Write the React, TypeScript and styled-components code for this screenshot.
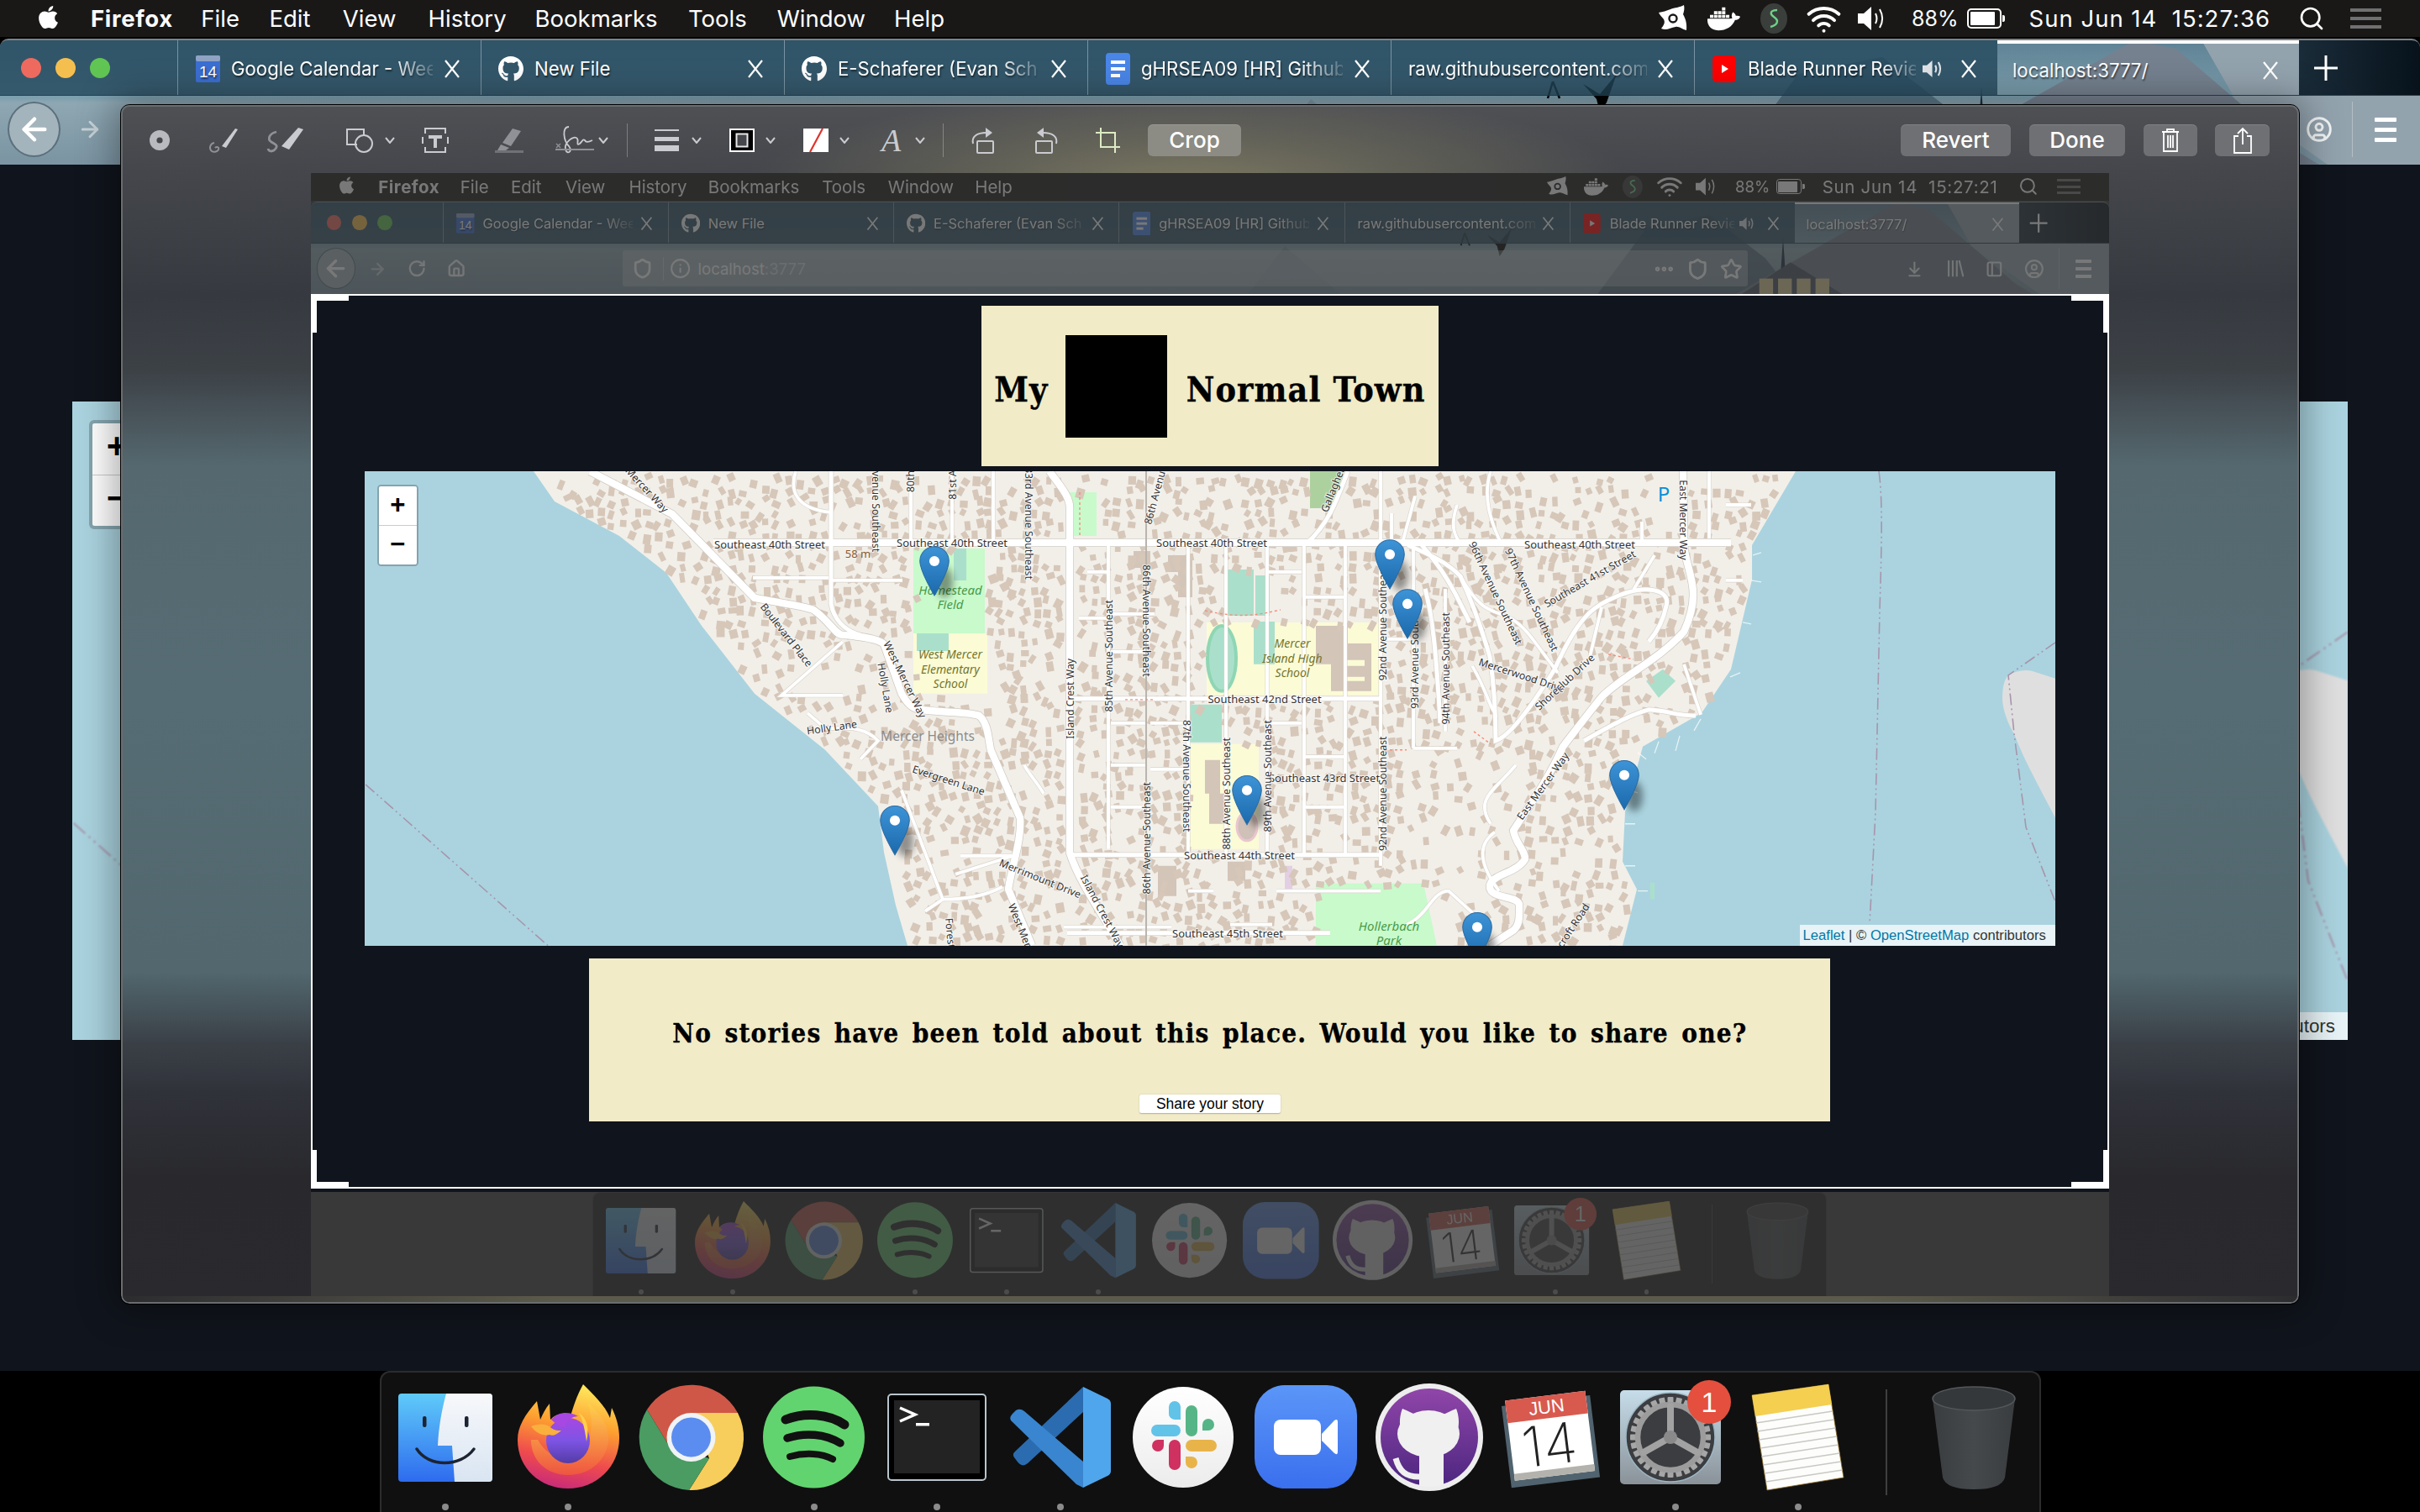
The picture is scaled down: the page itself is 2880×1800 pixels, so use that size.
import React from 'react'
import styled, { createGlobalStyle } from 'styled-components'
import { FaApple, FaDocker, FaGithub } from 'react-icons/fa'
import {
  ArrowDownToLine,
  ArrowLeft,
  ArrowRight,
  CircleUser,
  Ellipsis,
  House,
  Info,
  PanelLeft,
  RotateCw,
  Search,
  Shield,
  Star,
  Wifi,
} from 'lucide-react'

const GlobalStyle = createGlobalStyle`
  html, body {
    margin: 0;
    padding: 0;
    width: 2880px;
    height: 1800px;
    overflow: hidden;
    background: #000;
  }
  * { box-sizing: border-box; }
`

const UI_FONT = `Inter, "Liberation Sans", sans-serif`
const TYPE_FONT = `"DejaVu Serif Condensed", "DejaVu Serif", "Liberation Serif", serif`
const MONO_FONT = `"Liberation Mono", "Courier New", monospace`

/* ---------- desktop shell, used twice: the real one and the one in the screenshot ---------- */

const Screen = styled.div`
  position: relative;
  width: 2880px;
  height: 1800px;
  display: flex;
  flex-direction: column;
  background: #000;
  overflow: hidden;
`

const DimZone = styled.div<{ $dim?: boolean; $dock?: boolean }>`
  flex: none;
  background: ${({ $dim, $dock }) => ($dim ? ($dock ? '#393939' : '#363636') : 'transparent')};
  & > * {
    opacity: ${({ $dim, $dock }) => ($dim ? ($dock ? 0.22 : 0.33) : 1)};
  }
`

const MenuBarRow = styled.div`
  height: 44px;
  background: #191817;
  display: flex;
  align-items: center;
  padding-left: 42px;
  padding-right: 46px;
  color: #fff;
  font: 400 27.5px ${UI_FONT};
`

const MenuItem = styled.span<{ $bold?: boolean; $ml: number }>`
  margin-left: ${({ $ml }) => $ml}px;
  font-weight: ${({ $bold }) => ($bold ? 700 : 400)};
  letter-spacing: ${({ $bold }) => ($bold ? '0.7px' : '0')};
  white-space: nowrap;
`

const StatusGroup = styled.div`
  margin-left: auto;
  display: flex;
  align-items: center;
`

const StatusItem = styled.div<{ $ml: number }>`
  margin-left: ${({ $ml }) => $ml}px;
  display: flex;
  align-items: center;
  white-space: nowrap;
`

const BatteryLabel = styled.span`
  font-size: 25px;
`

const ClockLabel = styled.span`
  letter-spacing: 1px;
`

const BatteryShell = styled.div`
  width: 41px;
  height: 24px;
  border: 2px solid #fff;
  border-radius: 5px;
  padding: 2px;
  position: relative;
  &::before {
    content: '';
    display: block;
    height: 100%;
    width: 88%;
    background: #fff;
    border-radius: 1px;
  }
  &::after {
    content: '';
    position: absolute;
    right: -6px;
    top: 6px;
    width: 3px;
    height: 8px;
    background: #fff;
    border-radius: 0 2px 2px 0;
  }
`

const Browser = styled.div`
  position: relative;
  height: 150px;
  margin-top: 2px;
  border-top: 2px solid #7b8286;
  border-radius: 10px 10px 0 0;
  overflow: hidden;
  background: #0d1a24;
`

const WallpaperArt = styled.svg`
  position: absolute;
  left: 0;
  top: 0;
  width: 2880px;
  height: 148px;
`

const TabStrip = styled.div`
  position: relative;
  height: 66px;
  display: flex;
  border-bottom: 1px solid #26404f;
`

const LightsCell = styled.div`
  width: 211px;
  flex: none;
  display: flex;
  align-items: center;
  gap: 17px;
  padding-left: 25px;
  background: rgba(36, 72, 92, 0.8);
`

const Light = styled.span<{ $color: string }>`
  width: 24px;
  height: 24px;
  border-radius: 50%;
  background: ${({ $color }) => $color};
`

const Tab = styled.div<{ $active?: boolean }>`
  width: ${({ $active }) => ($active ? 359 : 361)}px;
  flex: none;
  display: flex;
  align-items: center;
  padding: 2px 0 0 ${({ $active }) => ($active ? 18 : 20)}px;
  border-left: ${({ $active }) => ($active ? '0' : '1px solid rgba(210, 225, 235, 0.45)')};
  border-top: ${({ $active }) => ($active ? '4px solid #fff' : '0')};
  background: ${({ $active }) => ($active ? 'transparent' : 'rgba(36, 72, 92, 0.8)')};
  color: #fff;
  font: 400 22.2px ${UI_FONT};
  text-shadow: 1px 2px 2px rgba(0, 0, 0, 0.55);
`

const Favicon = styled.span`
  width: 30px;
  height: 32px;
  flex: none;
  margin-right: 13px;
  display: flex;
  align-items: center;
  justify-content: center;
`

const TabTitle = styled.span<{ $w: number; $fade?: boolean }>`
  width: ${({ $w }) => $w}px;
  flex: none;
  white-space: nowrap;
  ${({ $fade }) => ($fade ? 'mask-image: linear-gradient(90deg, #000 80%, rgba(0, 0, 0, 0.15) 100%);' : '')}
`

const TabClose = styled.svg`
  margin-left: auto;
  margin-right: 24px;
  width: 20px;
  height: 22px;
  flex: none;
`

const NewTabCell = styled.div`
  flex: 1;
  display: flex;
  align-items: center;
  justify-content: center;
  padding-right: 80px;
  background: linear-gradient(90deg, #1a2c39, #07121b);
`

const ToolbarRow = styled.div`
  position: relative;
  height: 80px;
  display: flex;
  align-items: center;
  padding-left: 9px;
`

const BackButton = styled.div`
  width: 63px;
  height: 66px;
  flex: none;
  border-radius: 50%;
  border: 2px solid #5b707c;
  background: #a4b4bc;
  display: flex;
  align-items: center;
  justify-content: center;
  color: #fff;
`

const ChromeIcon = styled.div<{ $ml: number; $w?: number }>`
  margin-left: ${({ $ml }) => $ml}px;
  width: ${({ $w }) => $w ?? 30}px;
  flex: none;
  display: flex;
  align-items: center;
  justify-content: center;
  color: #f2f4f5;
`

const AddressBar = styled.div<{ $covered?: boolean }>`
  margin-left: 252px;
  width: 1801px;
  height: 58px;
  flex: none;
  display: flex;
  align-items: center;
  padding-left: 14px;
  border-radius: 4px;
  background: rgba(215, 220, 220, 0.4);
  color: #fff;
  font: 400 25px ${UI_FONT};
  visibility: ${({ $covered }) => ($covered ? 'hidden' : 'visible')};
`

const AddressDivider = styled.span`
  width: 1px;
  height: 38px;
  margin: 0 10px 0 16px;
  background: rgba(255, 255, 255, 0.35);
`

const Host = styled.span`
  margin-left: 11px;
`

const Port = styled.span`
  opacity: 0.55;
`

const AddressEnd = styled.div`
  margin-left: auto;
  display: flex;
  align-items: center;
  gap: 18px;
  padding-right: 8px;
`

const ToolbarDivider = styled.span<{ $ml: number }>`
  margin-left: ${({ $ml }) => $ml}px;
  width: 1px;
  height: 66px;
  background: rgba(255, 255, 255, 0.3);
`

const Burger = styled.div<{ $ml: number }>`
  margin-left: ${({ $ml }) => $ml}px;
  width: 26px;
  display: flex;
  flex-direction: column;
  gap: 7px;
  & > span {
    height: 5px;
    border-radius: 1px;
    background: #fff;
  }
`

const ListGlyph = styled.div`
  width: 37px;
  display: flex;
  flex-direction: column;
  gap: 6px;
  & > span {
    height: 4px;
    background: #707070;
  }
`

/* ---------- the page itself ---------- */

const PageArea = styled.div`
  position: relative;
  height: 1436px;
  flex: none;
  background: #10141c;
  display: flex;
  flex-direction: column;
  align-items: center;
  padding-top: 17px;
`

const TitleCard = styled.div<{ $covered?: boolean }>`
  width: 733px;
  height: 257px;
  flex: none;
  background: #f1ebc8;
  color: #000;
  display: flex;
  align-items: center;
  padding-left: 21px;
  font: 700 55px/1 ${TYPE_FONT};
  font-stretch: condensed;
  letter-spacing: 1.5px;
  -webkit-text-stroke: 0.5px #000;
  visibility: ${({ $covered }) => ($covered ? 'hidden' : 'visible')};
`

const TitleWord = styled.span`
  white-space: nowrap;
  padding-top: 14px;
`

const BlackBox = styled.div`
  width: 162px;
  height: 164px;
  margin-left: 28px;
  margin-right: 31px;
  background: #000;
`

const MapFrame = styled.div`
  position: relative;
  width: 2708px;
  height: 760px;
  margin-top: 8px;
  flex: none;
  overflow: hidden;
  background: #aad3df;
`

const MapArt = styled.svg`
  display: block;
  width: 2708px;
  height: 760px;
`

const ZoomControl = styled.div`
  position: absolute;
  left: 20px;
  top: 22px;
  width: 66px;
  height: 130px;
  border: 4px solid rgba(0, 0, 0, 0.22);
  border-radius: 6px;
  background-clip: padding-box;
  display: flex;
  flex-direction: column;
`

const ZoomButton = styled.div<{ $last?: boolean }>`
  flex: 1;
  display: flex;
  align-items: center;
  justify-content: center;
  background: #fff;
  color: #000;
  font: 700 42px/1 ${MONO_FONT};
  border-bottom: ${({ $last }) => ($last ? '0' : '1px solid #ccc')};
  border-radius: ${({ $last }) => ($last ? '0 0 3px 3px' : '3px 3px 0 0')};
`

const Attribution = styled.div`
  position: absolute;
  right: 0;
  bottom: 0;
  height: 33px;
  padding: 0 15px 0 5px;
  display: flex;
  align-items: center;
  background: rgba(255, 255, 255, 0.72);
  color: #333;
  font: 400 22.4px "Liberation Sans", sans-serif;
  white-space: nowrap;
  & > a {
    color: #0078a8;
    text-decoration: none;
  }
`

const StoryCard = styled.div<{ $covered?: boolean }>`
  width: 1988px;
  height: 260px;
  margin-top: 21px;
  flex: none;
  background: #f1ebc8;
  display: flex;
  flex-direction: column;
  align-items: center;
  padding-top: 97px;
  visibility: ${({ $covered }) => ($covered ? 'hidden' : 'visible')};
`

const StoryText = styled.p`
  margin: 0;
  color: #000;
  font: 700 42px/48px ${TYPE_FONT};
  font-stretch: condensed;
  letter-spacing: 1.6px;
  word-spacing: 6px;
  -webkit-text-stroke: 0.4px #000;
  white-space: nowrap;
`

const ShareButton = styled.button`
  width: 225px;
  height: 30px;
  margin-top: 72px;
  padding: 0;
  border: 0;
  border-radius: 3px;
  background: #fff;
  box-shadow: 0 1px 2px rgba(0, 0, 0, 0.25);
  color: #000;
  font: 400 23.5px/30px "Liberation Sans", sans-serif;
`

/* ---------- dock ---------- */

const DockShelf = styled.div`
  height: 170px;
  display: flex;
  justify-content: center;
`

const DockBody = styled.div`
  width: 1977px;
  height: 170px;
  padding: 0 5px 0 3px;
  display: flex;
  background: #101010;
  border: 2px solid #2c2c2c;
  border-bottom: 0;
  border-radius: 12px 12px 0 0;
`

const DockSlot = styled.div<{ $running?: boolean }>`
  position: relative;
  width: 146.4px;
  flex: none;
  display: flex;
  justify-content: center;
  padding-top: 13px;
  height: 168px;
  &::after {
    content: '';
    display: ${({ $running }) => ($running ? 'block' : 'none')};
    position: absolute;
    left: 50%;
    bottom: 4px;
    width: 8px;
    height: 8px;
    margin-left: -4px;
    border-radius: 50%;
    background: #8b8b8b;
  }
`

const DockSeparator = styled.span`
  width: 2px;
  height: 126px;
  margin: 20px 30px 0 31px;
  flex: none;
  background: #3f3f3f;
`

const DockArt = styled.svg<{ $top: number }>`
  display: block;
  margin-top: ${({ $top }) => $top}px;
  overflow: visible;
`

/* ---------- screenshot markup window ---------- */

const MarkupWindow = styled.div`
  position: absolute;
  left: 144px;
  top: 125px;
  width: 2592px;
  height: 1427px;
  display: flex;
  flex-direction: column;
  align-items: center;
  border: 2px solid #6a6d70;
  border-radius: 10px;
  outline: 1px solid #000;
  box-shadow: 0 0 44px 8px rgba(0, 0, 0, 0.35);
  background: linear-gradient(
    180deg,
    #4f5054 0%,
    #44464b 5.7%,
    #363a40 15.8%,
    #3c4146 22%,
    #55686f 30%,
    #566c74 50%,
    #52676e 72.4%,
    #3a3f46 78.5%,
    #30323a 82.5%,
    #29292d 89.5%,
    #2a2a2e 100%
  );
  overflow: hidden;
`

const MarkupBar = styled.div`
  width: 100%;
  height: 79px;
  flex: none;
  display: flex;
  align-items: center;
  padding: 0 33px 0 0;
  background: radial-gradient(
    ellipse 520px 110px at 1270px 90px,
    rgba(132, 128, 100, 0.85),
    rgba(132, 128, 100, 0)
  );
`

const ToolSlot = styled.div<{ $ml: number; $w: number }>`
  margin-left: ${({ $ml }) => $ml}px;
  width: ${({ $w }) => $w}px;
  flex: none;
  display: flex;
  align-items: center;
  justify-content: center;
`

const StyleGlyph = styled.span`
  font: italic 400 38px/30px "Liberation Serif", serif;
  color: #c9cbd0;
`

const BarDivider = styled.span<{ $ml: number }>`
  margin-left: ${({ $ml }) => $ml}px;
  width: 1px;
  height: 40px;
  flex: none;
  background: rgba(255, 255, 255, 0.28);
`

const BarButton = styled.div<{ $ml: number; $w: number; $light?: boolean }>`
  margin-left: ${({ $ml }) => $ml}px;
  width: ${({ $w }) => $w}px;
  height: 38px;
  flex: none;
  display: flex;
  align-items: center;
  justify-content: center;
  border-radius: 6px;
  background: ${({ $light }) => ($light ? '#8c8b84' : '#6f7073')};
  box-shadow: inset 0 1px 0 rgba(255, 255, 255, 0.12);
  color: #fff;
  font: 500 26px ${UI_FONT};
`

const BarSpacer = styled.div`
  flex: 1;
`

const ShotFrame = styled.div`
  position: relative;
  width: 2140px;
  height: 1337px;
  flex: none;
  overflow: hidden;
`

const ShotScale = styled.div`
  zoom: 0.743;
`

const CropRect = styled.div`
  position: absolute;
  left: 0;
  right: 0;
  top: 144px;
  height: 1065px;
  border: 2px solid #fff;
`

const CropCorner = styled.span<{ $v: 'top' | 'bottom'; $h: 'left' | 'right' }>`
  position: absolute;
  ${({ $v }) => $v}: -2px;
  ${({ $h }) => $h}: -2px;
  width: 45px;
  height: 46px;
  border-${({ $v }) => $v}: 8px solid #fff;
  border-${({ $h }) => $h}: 7px solid #fff;
`

const WindowBase = styled.div`
  width: 100%;
  height: 9px;
  flex: none;
  background: linear-gradient(90deg, #2c2c30 0%, #5c5a4a 20%, #5c5a4a 80%, #2c2c30 100%);
`

/* ---------- map data, in px of the 2012x565 small map ---------- */

const LAND: [number, number][] = [
  [201, 0], [226, 36], [303, 77], [359, 121], [401, 184], [464, 265], [548, 332], [611, 399],
  [618, 454], [632, 517], [646, 565], [1497, 565], [1514, 498], [1497, 465], [1500, 406],
  [1521, 328], [1591, 288], [1626, 236], [1651, 129], [1651, 88], [1703, 0],
]

const OPEN_AREAS = [
  [653, 92, 741, 265], [1002, 180, 1209, 267], [1020, 115, 1080, 175], [981, 278, 1020, 323],
  [981, 325, 1069, 450], [1132, 491, 1276, 565], [1125, 0, 1170, 44], [839, 25, 871, 77],
  [1525, 0, 1570, 70], [830, 0, 848, 565], [1525, 236, 1560, 270],
]

const inLand = (x: number, y: number) => {
  let inside = false
  for (let i = 0, j = LAND.length - 1; i < LAND.length; j = i++) {
    const [xi, yi] = LAND[i]
    const [xj, yj] = LAND[j]
    if (yi > y !== yj > y && x < ((xj - xi) * (y - yi)) / (yj - yi) + xi) inside = !inside
  }
  return inside
}

const buildBuildings = () => {
  let seed = 1977
  const rnd = () => {
    seed = (seed * 16807) % 2147483647
    return seed / 2147483647
  }
  let d = ''
  for (let y = 4; y < 565; y += 13) {
    for (let x = 190; x < 1690; x += 14) {
      const px = x + rnd() * 6
      const py = y + rnd() * 6
      if (!inLand(px, py) || !inLand(px - 9, py) || !inLand(px + 9, py)) continue
      if (OPEN_AREAS.some(([a, b, c, e]) => px > a && px < c && py > b && py < e)) continue
      const sparse = (px > 1230 && px < 1370 && py > 300) || (px > 470 && px < 640 && py > 200 && py < 300)
      if (rnd() < (sparse ? 0.62 : 0.26)) continue
      const w = 6 + rnd() * 4
      const h = 7 + rnd() * 5
      const a = rnd() * 1.2 - 0.6
      const c = Math.cos(a)
      const s = Math.sin(a)
      const pt = (u: number, v: number) => `${(px + u * c - v * s).toFixed(1)} ${(py + u * s + v * c).toFixed(1)}`
      d += `M${pt(0, 0)}L${pt(w, 0)}L${pt(w, h)}L${pt(0, h)}Z`
    }
  }
  return d
}

const BUILDINGS = buildBuildings()

const MAIN_ROADS = [
  'M268 0L366 51L464 151C500 158 520 160 534 165C555 180 560 195 569 195C595 197 612 200 618 206L639 265C645 275 650 282 660 284C690 288 715 286 731 291C742 300 742 318 745 332L780 413C782 440 770 470 766 498L794 565',
  'M815 0C828 18 839 30 839 43L839 454C850 490 880 530 899 565',
  'M1569 0L1570 88C1572 110 1581 125 1581 147C1581 165 1575 180 1570 191C1540 225 1495 245 1472 269C1455 290 1440 310 1426 328C1410 365 1385 400 1367 428C1370 445 1381 450 1381 462C1370 480 1339 480 1339 495C1339 510 1374 505 1374 517C1374 530 1375 540 1367 547L1339 565',
  'M415 85L1626 85',
]
const MID_ROADS = [
  'M843 271L1209 271M843 457L1209 457M836 550L1149 550',
  'M1241 88C1270 100 1290 110 1304 125C1320 160 1330 190 1339 221C1345 260 1346 290 1346 321C1365 315 1395 270 1416 236C1435 195 1450 170 1472 158C1490 148 1510 140 1528 141C1545 142 1552 150 1549 160C1545 180 1535 195 1528 203',
  'M555 0L555 158C558 175 570 190 590 195',
  'M1170 0C1160 25 1150 60 1122 85',
  'M1451 321C1480 305 1505 290 1528 284C1550 285 1565 292 1584 291',
  'M1258 88C1290 125 1300 150 1315 180M1262 140C1270 170 1275 210 1280 300',
]
const MINOR_ROADS = [
  'M650 0V85M699 0V85M748 0V85M885 85V450M980 85V271M1025 85V271M1074 85V271M1118 85V271M1167 85V271M1209 0V470M1248 85V330M1286 140V310M1248 330H1300',
  'M980 271V457M1025 271V457M1074 271V457M1118 271V457M1167 271V457',
  'M513 0C505 25 515 45 555 49M462 127H552M569 203L496 267H569M527 288L548 306C565 308 590 300 611 321L590 343',
  'M639 380L688 510L667 524M688 510C715 510 740 505 759 495M709 458H772L703 480M832 543H960M808 384C800 370 790 360 785 350',
  'M640 130H555M900 170H940M850 175H885M860 120H885M1085 500H1209M1010 500H980M1030 540H1080',
  'M1304 125C1340 190 1352 150 1390 200L1420 240M1318 232C1335 260 1340 285 1346 288M1472 162L1458 221M1300 40C1290 70 1300 80 1305 88M1222 50V85M1250 30L1235 85M1340 0C1330 30 1340 60 1352 85',
  'M1510 141L1535 100M1570 230L1590 290M1600 0V80M1520 60V85M1620 40H1650M1620 130H1640',
  'M1340 420C1320 390 1345 380 1370 350M1350 500C1320 460 1330 440 1345 430M1240 540C1265 530 1270 500 1290 500L1339 545',
  'M888 170H930M888 215H930M888 300H930M888 350H930M888 400H930M935 300H975M935 355H975M1075 120H1115M1120 150H1165M1075 300H1115M1120 340H1165M1120 400H1165M1210 200H1245',
]
const THIN_ROADS = ['M930 0V565']
const FOOTPATHS = [
  'M851 25V77M1000 166C1040 175 1060 172 1090 165M905 272H940M1320 310L1340 325M1480 218L1510 224M1214 332H1240',
]
const BOUNDARIES = [
  'M1 373L218 565',
  'M1802 0C1806 30 1806 70 1803 165L1798 406L1791 539',
  'M2012 204L1956 243L1963 313L1977 424L2012 513',
]

type MapLabelRow = [string, number, number, number]

const LABELS: MapLabelRow[] = [
  ['Southeast 40th Street', 482, 87, 0],
  ['Southeast 40th Street', 699, 85, 0],
  ['Southeast 40th Street', 1008, 85, 0],
  ['Southeast 40th Street', 1446, 87, 0],
  ['Southeast 42nd Street', 1071, 271, 0],
  ['Southeast 44th Street', 1041, 457, 0],
  ['Southeast 43rd Street', 1142, 365, 0],
  ['Southeast 45th Street', 1027, 550, 0],
  ['Mercer Way', 336, 22, 47],
  ['Boulevard Place', 502, 195, 52],
  ['West Mercer Way', 643, 248, 64],
  ['Holly Lane', 620, 258, 80],
  ['Holly Lane', 556, 305, -8],
  ['Evergreen Lane', 695, 368, 18],
  ['Island Crest Way', 839, 271, -90],
  ['85th Avenue Southeast', 885, 220, -90],
  ['86th Avenue Southeast', 930, 178, 90],
  ['86th Avenue Southeast', 930, 437, -90],
  ['87th Avenue Southeast', 978, 363, 90],
  ['88th Avenue Southeast', 1025, 384, -90],
  ['89th Avenue Southeast', 1074, 363, -90],
  ['Merrimount Drive', 804, 485, 22],
  ['Island Crest Way', 878, 524, 62],
  ['West Mer', 780, 541, 68],
  ['Forest', 697, 550, 85],
  ['Avenue Southeast', 608, 44, 90],
  ['80th', 650, 12, -90],
  ['81st A', 699, 16, -90],
  ['83rd Avenue Southeast', 790, 62, 90],
  ['86th Avenue', 941, 28, -75],
  ['Gallagher', 1152, 22, -68],
  ['East Mercer Way', 1569, 58, 90],
  ['92nd Avenue Southeast', 1211, 181, -90],
  ['93rd Avenue Southeast', 1249, 216, -90],
  ['94th Avenue Southeast', 1286, 235, -90],
  ['96th Avenue Southeast', 1346, 145, 65],
  ['97th Avenue Southeast', 1389, 153, 65],
  ['Southeast 41st Street', 1458, 128, -30],
  ['Mercerwood Drive', 1377, 243, 18],
  ['Shoreclub Drive', 1428, 251, -43],
  ['East Mercer Way', 1402, 375, -54],
  ['92nd Avenue Southeast', 1211, 384, -90],
  ['croft Road', 1438, 541, -57],
]

const PLACE_LABELS: { lines: string[]; x: number; y: number; color: string; size: number }[] = [
  { lines: ['Homestead', 'Field'], x: 697, y: 141, color: '#4a9a4a', size: 15 },
  { lines: ['West Mercer', 'Elementary', 'School'], x: 697, y: 218, color: '#75752c', size: 14 },
  { lines: ['Mercer', 'Island High', 'School'], x: 1104, y: 205, color: '#75752c', size: 14 },
  { lines: ['Hollerbach', 'Park'], x: 1219, y: 541, color: '#4a9a4a', size: 15 },
]

const PINS: [number, number][] = [
  [678, 148], [631, 457], [1050, 421], [1220, 140], [1241, 199], [1499, 403], [1324, 584],
]

const MapLabel = styled.text<{ $size: number }>`
  font-family: "Noto Sans", "Liberation Sans", sans-serif;
  font-size: ${({ $size }) => $size}px;
  fill: #333;
  stroke: #fff;
  stroke-width: 2px;
  stroke-opacity: 0.7;
  paint-order: stroke;
  text-anchor: middle;
  dominant-baseline: central;
`

const PlaceLabel = styled.text<{ $size: number; $color: string; $plain?: boolean }>`
  font-family: "Noto Sans", "Liberation Sans", sans-serif;
  font-style: ${({ $plain }) => ($plain ? 'normal' : 'italic')};
  font-size: ${({ $size }) => $size}px;
  fill: ${({ $color }) => $color};
  text-anchor: middle;
  dominant-baseline: central;
`

const StreetMap = ({ labels }: { labels: boolean }) => (
  <MapArt viewBox="0 0 2012 565" preserveAspectRatio="none">
    <defs>
      <linearGradient id="pinFill" x1="0" y1="0" x2="0" y2="1">
        <stop offset="0" stopColor="#3d94d6" />
        <stop offset="1" stopColor="#1b69ad" />
      </linearGradient>
      <filter id="pinBlur" x="-50%" y="-50%" width="200%" height="200%">
        <feGaussianBlur stdDeviation="4" />
      </filter>
      <filter id="soften" x="0" y="0" width="100%" height="100%">
        <feGaussianBlur stdDeviation="0.6" />
      </filter>
    </defs>
    <rect width="2012" height="565" fill="#aad3df" />
    <g filter="url(#soften)">
      <polygon points={LAND.map((p) => p.join(',')).join(' ')} fill="#f2efe9" />
      <path
        d="M1956 243C1965 238 1975 236 1984 238L2012 247V413C1995 380 1975 345 1963 313C1955 300 1950 285 1949 273C1949 260 1950 250 1956 243Z"
        fill="#e0dfdf"
      />
      <path d="M653 92H738V193H653Z M839 25H871V77H839Z M1132 491H1260L1276 565H1132Z" fill="#c8facc" />
      <path d="M1125 0H1170L1150 44H1125Z" fill="#add19e" />
      <path d="M653 193H741V265H653Z M1002 180H1209V267H1002Z M981 325H1064V450H981Z" fill="#fbfbd6" />
      <path
        d="M657 193H695V214H657Z M1023 117H1058V172H1023Z M1060 124H1077V172H1060Z M1058 179H1083V230H1058Z M981 278H1020V323H981Z M1525 250L1545 236L1560 250L1540 270Z M701 92H716V130H701Z M1530 490H1535V510H1530Z"
        fill="#aae0cb"
      />
      <ellipse cx="1020" cy="223" rx="17" ry="39" fill="#aae0cb" stroke="#8fd6b4" strokeWidth="4" />
      <path
        fillRule="evenodd"
        d="M1132 184H1170V205H1198V262H1150V230H1132Z M1165 225H1190V232H1165Z M1165 245H1190V250H1165Z M956 100H985V150H968V120H956Z M915 95H935V115H915Z M1000 344H1018V384H1026V420H1005V384H1000Z M944 470H966V506H944Z M1027 465H1048V488H1027Z"
        fill="#d3c5b8"
      />
      <path d="M1095 470H1104V500H1095Z" fill="#e3cfe3" />
      <ellipse cx="1050" cy="423" rx="12" ry="17" fill="#cfc0b8" stroke="#e9c6cf" strokeWidth="3" />
      <path d={BUILDINGS} fill="#d6c7b9" />
      <path d={MINOR_ROADS.join('')} fill="none" stroke="#d9d4cc" strokeWidth="5" />
      <path d={MID_ROADS.join('')} fill="none" stroke="#d9d4cc" strokeWidth="6.5" />
      <path d={MAIN_ROADS.join('')} fill="none" stroke="#cfcac2" strokeWidth="10" />
      <path d={MINOR_ROADS.join('')} fill="none" stroke="#fff" strokeWidth="3.8" />
      <path d={MID_ROADS.join('')} fill="none" stroke="#fff" strokeWidth="5" />
      <path d={MAIN_ROADS.join('')} fill="none" stroke="#fff" strokeWidth="8.5" strokeLinejoin="round" />
      <path d={THIN_ROADS.join('')} fill="none" stroke="#b9b5ae" strokeWidth="2" />
      <path d={FOOTPATHS.join('')} fill="none" stroke="#fa8a78" strokeWidth="1.4" strokeDasharray="3 3" />
      <path d={BOUNDARIES.join('')} fill="none" stroke="#a795ac" strokeWidth="1.6" strokeDasharray="14 4 2 4 2 4" />
      <path
        d="M1652 100l10 -3M1650 130l12 2M1640 180l10 2M1625 245l12 -5M1590 295l-8 14M1565 315l-5 18M1540 322l-5 14M1515 335l10 8M1505 380l10 3M1500 420h12M1500 470h12M1515 500h12"
        fill="none"
        stroke="#fff"
        strokeOpacity="0.7"
        strokeWidth="1.3"
      />
    </g>
    {labels && (
      <>
        {LABELS.map(([text, x, y, angle], i) => (
          <MapLabel key={i} x={x} y={y} $size={angle === 0 ? 13 : 12.3} transform={`rotate(${angle} ${x} ${y})`}>
            {text}
          </MapLabel>
        ))}
        <PlaceLabel x={587} y={98} $size={13} $color="#8a5a30" $plain>
          58 m
        </PlaceLabel>
        <PlaceLabel x={670} y={315} $size={15.5} $color="#8c8c8c" $plain>
          Mercer Heights
        </PlaceLabel>
        <PlaceLabel x={1546} y={27} $size={24} $color="#0092da" $plain>
          P
        </PlaceLabel>
        {PLACE_LABELS.map((place) =>
          place.lines.map((line, i) => (
            <PlaceLabel key={line + place.x} x={place.x} y={place.y + i * 17.5} $size={place.size} $color={place.color}>
              {line}
            </PlaceLabel>
          )),
        )}
        {PINS.map(([x, y]) => (
          <g key={x}>
            <ellipse cx={x + 12} cy={y - 16} rx="10" ry="18" fill="#000" opacity="0.4" filter="url(#pinBlur)" />
            <g transform={`translate(${x - 18} ${y - 59}) scale(1.44)`}>
              <path
                d="M12.5 0.5C5.6 0.5 0.5 6 0.5 12.5C0.5 21 12.5 41 12.5 41S24.5 21 24.5 12.5C24.5 6 19.4 0.5 12.5 0.5Z"
                fill="url(#pinFill)"
                stroke="#2a6ba3"
                strokeWidth="0.7"
              />
              <circle cx="12.5" cy="12.5" r="4.2" fill="#fff" />
            </g>
          </g>
        ))}
      </>
    )}
  </MapArt>
)

/* ---------- dock icons ---------- */

const FinderIcon = () => (
  <DockArt $top={12} width="112" height="105" viewBox="0 0 112 105">
    <defs>
      <linearGradient id="finderL" x1="0" y1="0" x2="0" y2="1">
        <stop offset="0" stopColor="#5fcbf9" />
        <stop offset="1" stopColor="#2e6bef" />
      </linearGradient>
      <linearGradient id="finderR" x1="0" y1="0" x2="0" y2="1">
        <stop offset="0" stopColor="#f7f8fb" />
        <stop offset="1" stopColor="#d9e5f2" />
      </linearGradient>
    </defs>
    <rect width="112" height="105" rx="4" fill="url(#finderL)" />
    <path d="M57 0H108Q112 0 112 4V101Q112 105 108 105H67L64 62H47C48 40 52 18 57 0Z" fill="url(#finderR)" />
    <rect x="29" y="27" width="4.5" height="13" rx="2" fill="#1c2432" />
    <rect x="79" y="27" width="4.5" height="13" rx="2" fill="#1c2432" />
    <path d="M22 66C36 88 74 88 90 66" fill="none" stroke="#1c2432" strokeWidth="3.4" strokeLinecap="round" />
  </DockArt>
)

const FirefoxIcon = () => (
  <DockArt $top={1} width="121" height="124" viewBox="0 0 121 124">
    <defs>
      <linearGradient id="foxOuter" x1="0.6" y1="0" x2="0.4" y2="1">
        <stop offset="0" stopColor="#ffe95c" />
        <stop offset="0.38" stopColor="#fd9f30" />
        <stop offset="0.72" stopColor="#ef4b4d" />
        <stop offset="1" stopColor="#c92b79" />
      </linearGradient>
      <linearGradient id="foxInner" x1="0.5" y1="0" x2="0.5" y2="1">
        <stop offset="0" stopColor="#ffd34f" />
        <stop offset="1" stopColor="#f05a3c" />
      </linearGradient>
      <linearGradient id="foxGlobe" x1="0.5" y1="0" x2="0.5" y2="1">
        <stop offset="0" stopColor="#a748e2" />
        <stop offset="0.5" stopColor="#7d54e4" />
        <stop offset="1" stopColor="#533ca6" />
      </linearGradient>
    </defs>
    <path
      d="M78 0C70 14 66 28 63 38C52 33 45 36 39 42L38 23C33 29 30 35 27 42L23 20C9 36 0 50 0 66C0 100 27 124 60 124C94 124 121 98 121 64C121 52 118 40 112 28L110 40C104 25 90 12 78 0Z"
      fill="url(#foxOuter)"
    />
    <path
      d="M16 66C16 92 36 108 60 108C88 108 108 88 108 64C108 46 96 34 84 22C88 36 90 52 84 70C78 92 40 96 24 66Z"
      fill="url(#foxInner)"
      opacity="0.85"
    />
    <ellipse cx="60" cy="67" rx="26" ry="27" fill="url(#foxGlobe)" />
    <path
      d="M16 50C24 47 34 46 40 52C44 55 48 55 52 55C46 60 42 62 38 60C30 62 22 58 16 50Z"
      fill="#f9b03c"
    />
    <path d="M40 42C48 32 62 32 72 38C66 38 58 42 56 52C50 50 44 46 40 42Z" fill="#a748e2" />
    <path d="M73 34C82 40 86 52 82 68C80 54 78 44 73 34Z" fill="#ffcf4d" />
  </DockArt>
)

const ChromeAppIcon = () => (
  <DockArt $top={1} width="125" height="126" viewBox="0 0 125 126">
    <path d="M62.5 34L118 34A62.5 63 0 0 0 10 30L36 73Z" fill="#cf5747" />
    <path d="M62.5 34L118 34A62.5 63 0 0 1 60 126L84 88Z" fill="#f7cd5c" />
    <path d="M10 30A62.5 63 0 0 0 60 126L84 88L36 73Z" fill="#4a9c62" />
    <circle cx="62.5" cy="63" r="29" fill="#f1f3f4" />
    <circle cx="62.5" cy="63" r="23.5" fill="#5a8def" />
  </DockArt>
)

const SpotifyIcon = () => (
  <DockArt $top={3} width="121" height="122" viewBox="0 0 121 122">
    <circle cx="60.5" cy="61" r="60.5" fill="#62d46f" />
    <g fill="none" stroke="#111" strokeLinecap="round">
      <path d="M27 40C50 31 78 33 97 46" strokeWidth="11" />
      <path d="M29 62C50 55 74 57 92 68" strokeWidth="9.5" />
      <path d="M32 84C50 79 70 80 83 87" strokeWidth="8" />
    </g>
  </DockArt>
)

const TerminalIcon = () => (
  <DockArt $top={12} width="118" height="104" viewBox="0 0 118 104">
    <rect x="1" y="1" width="116" height="102" rx="4" fill="#000" stroke="#b8c4cc" strokeWidth="2" />
    <rect x="8" y="8" width="102" height="87" fill="#232323" />
    <path d="M15 17L33 25L15 33" fill="none" stroke="#fff" strokeWidth="3.5" />
    <rect x="34" y="35" width="16" height="3.5" fill="#fff" />
  </DockArt>
)

const VSCodeIcon = () => (
  <DockArt $top={4} width="121" height="120" viewBox="0 0 121 120">
    <path d="M88 0L88 30L22 91Q15 97 9 88L6 84Q3 80 8 76Z" fill="#2b6cb0" />
    <path d="M2 40Q0 36 4 32L8 28Q13 25 18 29L88 89V120L80 116Z" fill="#3a85d0" />
    <path d="M88 0L117 14Q121 16 121 20V100Q121 104 117 106L88 120Z" fill="#4fa6ec" />
  </DockArt>
)

const SlackIcon = () => (
  <DockArt $top={4} width="120" height="120" viewBox="0 0 120 120">
    <defs>
      <linearGradient id="slackBg" x1="0" y1="0" x2="0" y2="1">
        <stop offset="0" stopColor="#fff" />
        <stop offset="1" stopColor="#ececec" />
      </linearGradient>
    </defs>
    <circle cx="60" cy="60" r="60" fill="url(#slackBg)" />
    <rect x="22" y="45" width="35" height="14" rx="7" fill="#61c3e8" />
    <path d="M43 24a7 7 0 0 1 14 0V39H50a7 7 0 0 1 -7 -8Z" fill="#61c3e8" />
    <rect x="63" y="22" width="14" height="37" rx="7" fill="#56b586" />
    <path d="M83 45a7 7 0 1 1 7 7H83Z" fill="#56b586" />
    <rect x="63" y="63" width="37" height="14" rx="7" fill="#e8b44a" />
    <path d="M63 83H70a7 7 0 1 1 -7 7Z" fill="#e8b44a" />
    <rect x="43" y="63" width="14" height="36" rx="7" fill="#cf3160" />
    <path d="M37 63V70a7 7 0 1 1 -7 -7Z" fill="#cf3160" />
  </DockArt>
)

const ZoomIcon = () => (
  <DockArt $top={2} width="122" height="123" viewBox="0 0 122 123">
    <defs>
      <linearGradient id="zoomBg" x1="0" y1="0" x2="0" y2="1">
        <stop offset="0" stopColor="#5b96f8" />
        <stop offset="1" stopColor="#3a6fee" />
      </linearGradient>
    </defs>
    <rect width="122" height="123" rx="36" fill="url(#zoomBg)" />
    <rect x="23" y="41" width="56" height="42" rx="8" fill="#fff" />
    <path d="M80 58L95 42Q99 39 99 44V79Q99 84 95 81L80 66Z" fill="#fff" />
  </DockArt>
)

const GithubDesktopIcon = () => (
  <DockArt $top={-1} width="128" height="130" viewBox="0 0 128 130">
    <defs>
      <linearGradient id="ghBg" x1="0" y1="0" x2="0" y2="1">
        <stop offset="0" stopColor="#9046a9" />
        <stop offset="1" stopColor="#4c2680" />
      </linearGradient>
      <clipPath id="ghClip">
        <circle cx="64" cy="65" r="59" />
      </clipPath>
    </defs>
    <circle cx="64" cy="65" r="64" fill="#ededed" />
    <circle cx="64" cy="65" r="58" fill="url(#ghBg)" />
    <g fill="#f0f0f0" clipPath="url(#ghClip)">
      <ellipse cx="63" cy="61" rx="37" ry="28" />
      <path d="M32 31C38 33 46 38 52 40L30 56C28 48 29 38 32 31ZM96 31C90 33 82 38 76 40L98 56C100 48 99 38 96 31Z" />
      <rect x="52" y="80" width="29" height="50" />
      <path d="M24 90C28 105 36 113 54 112" fill="none" stroke="#f0f0f0" strokeWidth="7" />
    </g>
  </DockArt>
)

const IconText = styled.text<{ $size: number; $color: string; $thin?: boolean }>`
  font-family: ${({ $thin }) => ($thin ? 'Inter, sans-serif' : '"Liberation Sans", sans-serif')};
  font-size: ${({ $size }) => $size}px;
  font-weight: ${({ $thin }) => ($thin ? 200 : 400)};
  fill: ${({ $color }) => $color};
  text-anchor: middle;
`

const CalendarIcon = () => (
  <DockArt $top={6} width="118" height="118" viewBox="0 0 118 118">
    <g transform="rotate(-7 59 59)">
      <rect x="4" y="14" width="106" height="98" fill="#50636f" />
      <rect x="9" y="8" width="96" height="96" fill="#fff" />
      <rect x="9" y="96" width="96" height="8" fill="#b4b2ac" />
      <rect x="9" y="8" width="96" height="27" fill="#d85a4f" />
      <IconText x="57" y="29" $size={22} $color="#fff">JUN</IconText>
      <IconText x="55" y="90" $size={66} $color="#222" $thin>14</IconText>
    </g>
  </DockArt>
)

const SysPrefsIcon = () => {
  const teeth = Array.from({ length: 28 }, (_, i) => i * (360 / 28))
  return (
    <DockArt $top={-4} width="132" height="124" viewBox="0 0 132 124">
      <defs>
        <linearGradient id="prefBg" x1="0" y1="0" x2="0" y2="1">
          <stop offset="0" stopColor="#c6dde9" />
          <stop offset="1" stopColor="#8a9299" />
        </linearGradient>
      </defs>
      <rect x="0" y="12" width="120" height="112" rx="5" fill="url(#prefBg)" />
      <circle cx="60" cy="68" r="53" fill="#3b3d40" stroke="#9db6c4" strokeWidth="1.5" />
      <g fill="#a6a6a6">
        {teeth.map((a) => (
          <rect key={a} x="56.5" y="20" width="7" height="11" rx="1" transform={`rotate(${a} 60 68)`} />
        ))}
      </g>
      <circle cx="60" cy="68" r="39" fill="none" stroke="#9c9c9c" strokeWidth="6.5" />
      <g stroke="#a2a2a2" strokeWidth="8" strokeLinecap="round">
        <path d="M60 68L60 31M60 68L28 86M60 68L92 86" />
      </g>
      <circle cx="60" cy="68" r="8" fill="#8a8a8a" />
      <circle cx="106" cy="26" r="26" fill="#e44f3e" />
      <IconText x="106" y="38" $size={34} $color="#fff">1</IconText>
    </DockArt>
  )
}

const NotesIcon = () => (
  <DockArt $top={1} width="109" height="126" viewBox="0 0 109 126">
    <polygon points="0,13 91,0 109,111 18,126" fill="#fdfdfb" stroke="#8d6a20" strokeWidth="0.8" />
    <polygon points="0,13 91,0 95,24 4,38" fill="#f4cf50" />
    <g stroke="#c8c8c4" strokeWidth="1.3">
      {[0, 1, 2, 3, 4, 5, 6, 7].map((i) => (
        <line key={i} x1={5 + i * 1.65} y1={46 + i * 10} x2={96 + i * 1.65} y2={32 + i * 10} />
      ))}
    </g>
  </DockArt>
)

const TrashIcon = () => (
  <DockArt $top={4} width="98" height="122" viewBox="0 0 98 122">
    <defs>
      <linearGradient id="trashBody" x1="0" y1="0" x2="1" y2="0">
        <stop offset="0" stopColor="#3a3d40" />
        <stop offset="0.5" stopColor="#46494c" />
        <stop offset="1" stopColor="#3a3d40" />
      </linearGradient>
    </defs>
    <path d="M0 14L12 108Q16 122 49 122Q82 122 86 108L98 14Z" fill="url(#trashBody)" />
    <ellipse cx="49" cy="14" rx="49" ry="14" fill="#35383b" stroke="#55585b" strokeWidth="1.5" />
  </DockArt>
)

const DOCK_ICONS: { key: string; icon: React.ReactNode; running: boolean }[] = [
  { key: 'finder', icon: <FinderIcon />, running: true },
  { key: 'firefox', icon: <FirefoxIcon />, running: true },
  { key: 'chrome', icon: <ChromeAppIcon />, running: false },
  { key: 'spotify', icon: <SpotifyIcon />, running: true },
  { key: 'terminal', icon: <TerminalIcon />, running: true },
  { key: 'vscode', icon: <VSCodeIcon />, running: true },
  { key: 'slack', icon: <SlackIcon />, running: false },
  { key: 'zoom', icon: <ZoomIcon />, running: false },
  { key: 'github', icon: <GithubDesktopIcon />, running: false },
  { key: 'calendar', icon: <CalendarIcon />, running: false },
  { key: 'prefs', icon: <SysPrefsIcon />, running: true },
  { key: 'notes', icon: <NotesIcon />, running: true },
]

const Dock = () => (
  <DockShelf>
    <DockBody>
      {DOCK_ICONS.map(({ key, icon, running }) => (
        <DockSlot key={key} $running={running}>
          {icon}
        </DockSlot>
      ))}
      <DockSeparator />
      <DockSlot>
        <TrashIcon />
      </DockSlot>
    </DockBody>
  </DockShelf>
)

/* ---------- menu bar ---------- */

const MENU_ITEMS: [string, number][] = [
  ['File', 33.3],
  ['Edit', 35.5],
  ['View', 38.4],
  ['History', 38],
  ['Bookmarks', 34],
  ['Tools', 36.3],
  ['Window', 36],
  ['Help', 34],
]

const AvastGlyph = () => (
  <svg width="34" height="32" viewBox="0 0 34 32">
    <path
      d="M30 0C31 4 30 8 29 11C31 15 34 20 33 30C28 29 24 25 20 26C14 27 9 31 3 28C6 24 8 21 6 17C4 14 1 12 0 9C5 8 9 7 14 5C19 3 25 3 30 0Z"
      fill="#fff"
    />
    <circle cx="17" cy="16" r="4.5" fill="none" stroke="#191817" strokeWidth="2.4" />
  </svg>
)

const StashGlyph = () => (
  <svg width="32" height="36" viewBox="0 0 32 36">
    <ellipse cx="16" cy="18" rx="16" ry="18" fill="#3b3f3c" />
    <path d="M20 8C14 8 12 10 13 13C14 16 20 17 20 21C20 25 16 27 12 28" fill="none" stroke="#6fd08a" strokeWidth="2.4" />
  </svg>
)

const VolumeGlyph = () => (
  <svg width="36" height="30" viewBox="0 0 36 30">
    <path d="M0 9H7L16 1V29L7 21H0Z" fill="#fff" />
    <path d="M21 9C23 13 23 17 21 21M26 4C30 11 30 19 26 26" fill="none" stroke="#fff" strokeWidth="2" />
  </svg>
)

const MenuBar = ({ clock }: { clock: string }) => (
  <MenuBarRow>
    <FaApple size={31} style={{ marginTop: -4 }} />
    <MenuItem $bold $ml={35}>Firefox</MenuItem>
    {MENU_ITEMS.map(([label, gap]) => (
      <MenuItem key={label} $ml={gap}>
        {label}
      </MenuItem>
    ))}
    <StatusGroup>
      <StatusItem $ml={0}><AvastGlyph /></StatusItem>
      <StatusItem $ml={24}><FaDocker size={39} /></StatusItem>
      <StatusItem $ml={24}><StashGlyph /></StatusItem>
      <StatusItem $ml={22}><Wifi size={43} strokeWidth={2.2} /></StatusItem>
      <StatusItem $ml={19}><VolumeGlyph /></StatusItem>
      <StatusItem $ml={28}><BatteryLabel>88%</BatteryLabel></StatusItem>
      <StatusItem $ml={10}><BatteryShell /></StatusItem>
      <StatusItem $ml={33}><ClockLabel>Sun Jun 14&nbsp;&nbsp;{clock}</ClockLabel></StatusItem>
      <StatusItem $ml={33}><Search size={32} strokeWidth={2} /></StatusItem>
      <StatusItem $ml={30}>
        <ListGlyph>
          <span />
          <span />
          <span />
        </ListGlyph>
      </StatusItem>
    </StatusGroup>
  </MenuBarRow>
)

/* ---------- browser chrome ---------- */

const GCalFavicon = () => (
  <svg width="29" height="32" viewBox="0 0 29 32">
    <rect width="29" height="32" rx="2" fill="#3b6fd2" />
    <rect width="29" height="7" rx="2" fill="#8fa3c4" />
    <IconText x="14.5" y="26" $size={19} $color="#fff">14</IconText>
  </svg>
)

const DocsFavicon = () => (
  <svg width="29" height="38" viewBox="0 0 29 38">
    <rect width="29" height="38" rx="4" fill="#4a86e8" />
    <rect x="6" y="9" width="17" height="4" fill="#fff" />
    <rect x="6" y="17" width="17" height="4" fill="#fff" />
    <rect x="6" y="25" width="11" height="4" fill="#fff" />
  </svg>
)

const YoutubeFavicon = () => (
  <svg width="28" height="32" viewBox="0 0 28 32">
    <rect width="28" height="32" rx="5" fill="#f00" />
    <path d="M11 11L19 16L11 21Z" fill="#fff" />
  </svg>
)

const CloseGlyph = () => (
  <TabClose viewBox="0 0 20 22">
    <path d="M2 1L18 21M18 1L2 21" stroke="#fff" strokeWidth="2.2" />
  </TabClose>
)

const TABS: { title: string; icon: React.ReactNode; w: number; fade?: boolean; sound?: boolean }[] = [
  { title: 'Google Calendar - Wee', icon: <GCalFavicon />, w: 240, fade: true },
  { title: 'New File', icon: <FaGithub size={32} color="#fff" />, w: 240 },
  { title: 'E-Schaferer (Evan Sch', icon: <FaGithub size={32} color="#fff" />, w: 240, fade: true },
  { title: 'gHRSEA09 [HR] Github', icon: <DocsFavicon />, w: 240, fade: true },
  { title: 'raw.githubusercontent.com', icon: null, w: 284, fade: true },
  { title: 'Blade Runner Revie', icon: <YoutubeFavicon />, w: 200, fade: true, sound: true },
]

const SoundGlyph = () => (
  <svg width="26" height="30" viewBox="0 0 36 30" style={{ marginLeft: 8 }}>
    <path d="M0 9H7L16 1V29L7 21H0Z" fill="#e0e4e8" />
    <path d="M21 9C23 13 23 17 21 21M26 4C30 11 30 19 26 26" fill="none" stroke="#e0e4e8" strokeWidth="3" />
  </svg>
)

const Wallpaper = () => (
  <WallpaperArt viewBox="0 0 2880 148" preserveAspectRatio="none">
    <defs>
      <linearGradient id="sky" x1="0" y1="0" x2="0" y2="1">
        <stop offset="0" stopColor="#5e8294" />
        <stop offset="0.47" stopColor="#7ea0af" />
        <stop offset="0.5" stopColor="#8ea7b2" />
        <stop offset="1" stopColor="#7b94a2" />
      </linearGradient>
    </defs>
    <rect width="2880" height="148" fill="url(#sky)" />
    <polygon points="1500,148 1560,70 1650,148" fill="#6d8798" opacity="0.5" />
    <polygon points="2060,148 2140,40 2240,20 2330,90 2375,148" fill="#2f4a5e" opacity="0.5" />
    <polygon points="2280,148 2540,0 2590,10 2730,130 2760,148" fill="#75818f" />
    <polygon points="2620,0 2880,0 2880,148 2770,148 2660,70" fill="#93a3ae" />
    <polygon points="2352,148 2358,55 2364,148" fill="#1d3042" />
    <path d="M1848 49L1842 69M1848 49L1856 69" stroke="#000" strokeWidth="2.5" fill="none" />
    <path d="M1884 52C1895 58 1900 62 1904 64L1924 40L1912 74L1904 86L1900 70Z" fill="#000" />
    <polygon points="2290,148 2370,96 2455,148" fill="#4a5662" />
    <g fill="#d9cb95">
      <rect x="2320" y="122" width="22" height="26" />
      <rect x="2350" y="122" width="22" height="26" />
      <rect x="2380" y="122" width="22" height="26" />
      <rect x="2410" y="122" width="22" height="26" />
    </g>
  </WallpaperArt>
)

const BrowserChrome = ({ covered }: { covered?: boolean }) => (
  <Browser>
    <Wallpaper />
    <TabStrip>
      <LightsCell>
        <Light $color="#ee6a5f" />
        <Light $color="#f5bf4f" />
        <Light $color="#61c554" />
      </LightsCell>
      {TABS.map((tab) => (
        <Tab key={tab.title}>
          {tab.icon && <Favicon>{tab.icon}</Favicon>}
          <TabTitle $w={tab.w} $fade={tab.fade}>
            {tab.title}
          </TabTitle>
          {tab.sound && <SoundGlyph />}
          <CloseGlyph />
        </Tab>
      ))}
      <Tab $active>
        <TabTitle $w={280}>localhost:3777/</TabTitle>
        <CloseGlyph />
      </Tab>
      <NewTabCell>
        <svg width="30" height="34" viewBox="0 0 30 34">
          <path d="M15 2V32M1 17H29" stroke="#fff" strokeWidth="3" />
        </svg>
      </NewTabCell>
    </TabStrip>
    <ToolbarRow>
      <BackButton>
        <ArrowLeft size={42} strokeWidth={2.6} />
      </BackButton>
      <ChromeIcon $ml={20}>
        <ArrowRight size={36} strokeWidth={2.4} opacity={0.6} />
      </ChromeIcon>
      <ChromeIcon $ml={33}>
        <RotateCw size={34} strokeWidth={2.6} />
      </ChromeIcon>
      <ChromeIcon $ml={33}>
        <House size={34} strokeWidth={2.6} />
      </ChromeIcon>
      <AddressBar $covered={covered}>
        <Shield size={34} strokeWidth={2.6} />
        <AddressDivider />
        <Info size={34} strokeWidth={2} />
        <Host>
          localhost<Port>:3777</Port>
        </Host>
        <AddressEnd>
          <Ellipsis size={36} strokeWidth={3} />
          <Shield size={36} strokeWidth={2.6} />
          <Star size={36} strokeWidth={2.4} />
        </AddressEnd>
      </AddressBar>
      <ChromeIcon $ml={253} $w={28}>
        <ArrowDownToLine size={36} strokeWidth={2.4} />
      </ChromeIcon>
      <ChromeIcon $ml={38} $w={28}>
        <svg width="30" height="34" viewBox="0 0 30 34">
          <path d="M3 3V31M10 3V31M17 3V31M21 3L28 31" stroke="#f2f4f5" strokeWidth="3" />
        </svg>
      </ChromeIcon>
      <ChromeIcon $ml={35} $w={28}>
        <PanelLeft size={36} strokeWidth={2.4} />
      </ChromeIcon>
      <ChromeIcon $ml={33} $w={32}>
        <CircleUser size={38} strokeWidth={2.2} />
      </ChromeIcon>
      <ToolbarDivider $ml={23} />
      <Burger $ml={26}>
        <span />
        <span />
        <span />
      </Burger>
    </ToolbarRow>
  </Browser>
)

/* ---------- page ---------- */

const TownPage = ({ covered }: { covered?: boolean }) => (
  <PageArea>
    <TitleCard $covered={covered}>
      <TitleWord>My</TitleWord>
      <BlackBox />
      <TitleWord>Normal Town</TitleWord>
    </TitleCard>
    <MapFrame>
      <StreetMap labels={!covered} />
      <ZoomControl>
        <ZoomButton>+</ZoomButton>
        <ZoomButton $last>−</ZoomButton>
      </ZoomControl>
      <Attribution>
        <a>Leaflet</a>&nbsp;|&nbsp;©&nbsp;<a>OpenStreetMap</a>&nbsp;contributors
      </Attribution>
    </MapFrame>
    <StoryCard $covered={covered}>
      <StoryText>No stories have been told about this place. Would you like to share one?</StoryText>
      <ShareButton>Share your story</ShareButton>
    </StoryCard>
  </PageArea>
)

const Desktop = ({ clock, dim }: { clock: string; dim?: boolean }) => (
  <Screen>
    <DimZone $dim={dim}>
      <MenuBar clock={clock} />
    </DimZone>
    <DimZone $dim={dim}>
      <BrowserChrome covered={!dim} />
    </DimZone>
    <TownPage covered={!dim} />
    <DimZone $dim={dim} $dock>
      <Dock />
    </DimZone>
  </Screen>
)

/* ---------- markup toolbar icons ---------- */

const TOOL_GREY = '#8f9197'
const TOOL_LIGHT = '#c9cbd0'

const Chevron = () => (
  <svg width="12" height="8" viewBox="0 0 12 8">
    <path d="M1 1L6 7L11 1" fill="none" stroke={TOOL_LIGHT} strokeWidth="2" />
  </svg>
)

type Tool = { ml: number; w: number; icon: React.ReactNode }

const TOOLS_BEFORE: Tool[] = [
  {
    ml: 32,
    w: 24,
    icon: (
      <svg width="24" height="24" viewBox="0 0 24 24">
        <circle cx="12" cy="12" r="12" fill="#b8bac0" />
        <circle cx="12" cy="12" r="3.6" fill="#45474c" />
      </svg>
    ),
  },
  {
    ml: 46,
    w: 37,
    icon: (
      <svg width="37" height="30" viewBox="0 0 37 30">
        <path d="M7 18C2 19 1 24 3 27C5 30 11 29 12 26C13 23 10 22 8 24" fill="none" stroke={TOOL_GREY} strokeWidth="2" />
        <path d="M16 22L32 1L35 2L21 24Z" fill={TOOL_LIGHT} />
      </svg>
    ),
  },
  {
    ml: 32,
    w: 44,
    icon: (
      <svg width="44" height="30" viewBox="0 0 44 30">
        <path d="M12 5C3 7 1 14 6 17C11 20 14 21 11 25C8 29 3 29 2 25" fill="none" stroke={TOOL_GREY} strokeWidth="2.8" />
        <path d="M18 22L38 0L44 2L27 26Z" fill={TOOL_LIGHT} />
      </svg>
    ),
  },
  {
    ml: 50,
    w: 34,
    icon: (
      <svg width="34" height="30" viewBox="0 0 34 30">
        <path d="M14 20H2V2H22V9" fill="none" stroke={TOOL_LIGHT} strokeWidth="2" />
        <circle cx="22" cy="19" r="10" fill="none" stroke={TOOL_LIGHT} strokeWidth="2" />
      </svg>
    ),
  },
  { ml: 13, w: 12, icon: <Chevron /> },
  {
    ml: 32,
    w: 32,
    icon: (
      <svg width="32" height="30" viewBox="0 0 32 30">
        <path d="M4 7V1H28V7M4 23V29H28V23" fill="none" stroke={TOOL_LIGHT} strokeWidth="2" />
        <path d="M8 9H24V13H18V24H14V13H8Z" fill={TOOL_LIGHT} />
        <path d="M1 11V19M31 11V19" stroke={TOOL_LIGHT} strokeWidth="2" />
      </svg>
    ),
  },
  {
    ml: 54,
    w: 36,
    icon: (
      <svg width="36" height="30" viewBox="0 0 36 30">
        <path d="M22 1L32 4L20 22L10 18Z" fill={TOOL_GREY} />
        <path d="M8 20L18 24L14 27H4Z" fill={TOOL_GREY} />
        <rect x="1" y="27" width="34" height="3" fill="#6f7176" />
      </svg>
    ),
  },
  {
    ml: 37,
    w: 46,
    icon: (
      <svg width="46" height="34" viewBox="0 0 46 34">
        <path
          d="M16 1C7 1 10 18 16 24C21 30 14 35 12 28C10 20 22 10 26 15C28 18 24 24 29 21C32 18 33 15 35 17C36 19 38 20 44 17"
          fill="none"
          stroke={TOOL_LIGHT}
          strokeWidth="1.8"
        />
        <path d="M0 28H46" stroke={TOOL_GREY} strokeWidth="2" />
        <path d="M1 21L6 26M6 21L1 26" stroke={TOOL_GREY} strokeWidth="1.4" />
      </svg>
    ),
  },
  { ml: 5, w: 12, icon: <Chevron /> },
]

const TOOLS_STYLE: Tool[] = [
  {
    ml: 32,
    w: 29,
    icon: (
      <svg width="29" height="26" viewBox="0 0 29 26">
        <rect y="0" width="29" height="2" fill={TOOL_LIGHT} />
        <rect y="9" width="29" height="5" fill={TOOL_LIGHT} />
        <rect y="19" width="29" height="7" fill={TOOL_LIGHT} />
      </svg>
    ),
  },
  { ml: 15, w: 12, icon: <Chevron /> },
  {
    ml: 33,
    w: 30,
    icon: (
      <svg width="30" height="28" viewBox="0 0 30 28">
        <rect x="1" y="1" width="28" height="26" fill="#000" stroke="#fff" strokeWidth="2" />
        <rect x="8.5" y="6.5" width="13" height="15" fill="#45474c" stroke="#e8e8e8" strokeWidth="2" />
      </svg>
    ),
  },
  { ml: 13, w: 12, icon: <Chevron /> },
  {
    ml: 33,
    w: 30,
    icon: (
      <svg width="30" height="28" viewBox="0 0 30 28">
        <rect width="30" height="28" fill="#fff" />
        <path d="M8 28L23 0" stroke="#e0332c" strokeWidth="2.2" />
      </svg>
    ),
  },
  { ml: 13, w: 12, icon: <Chevron /> },
  { ml: 36, w: 27, icon: <StyleGlyph>A</StyleGlyph> },
  { ml: 15, w: 12, icon: <Chevron /> },
]

const TOOLS_AFTER: Tool[] = [
  {
    ml: 32,
    w: 30,
    icon: (
      <svg width="30" height="32" viewBox="0 0 30 32">
        <rect x="8" y="17" width="19" height="14" rx="1" fill="none" stroke={TOOL_LIGHT} strokeWidth="2" />
        <path d="M3 20C1 12 7 7 19 7" fill="none" stroke={TOOL_LIGHT} strokeWidth="2" />
        <path d="M18 1L26 7L18 13Z" fill={TOOL_LIGHT} />
      </svg>
    ),
  },
  {
    ml: 45,
    w: 30,
    icon: (
      <svg width="30" height="32" viewBox="0 0 30 32">
        <rect x="3" y="17" width="19" height="14" rx="1" fill="none" stroke={TOOL_LIGHT} strokeWidth="2" />
        <path d="M27 20C29 12 23 7 11 7" fill="none" stroke={TOOL_LIGHT} strokeWidth="2" />
        <path d="M12 1L4 7L12 13Z" fill={TOOL_LIGHT} />
      </svg>
    ),
  },
  {
    ml: 44,
    w: 29,
    icon: (
      <svg width="29" height="30" viewBox="0 0 29 30">
        <path d="M6 0V23H29M0 6H23V30" fill="none" stroke="#dcebc4" strokeWidth="2" />
      </svg>
    ),
  },
]

const ToolRun = ({ tools }: { tools: Tool[] }) => (
  <>
    {tools.map((tool, i) => (
      <ToolSlot key={i} $ml={tool.ml} $w={tool.w}>
        {tool.icon}
      </ToolSlot>
    ))}
  </>
)

const MarkupToolbar = () => (
  <MarkupBar>
    <ToolRun tools={TOOLS_BEFORE} />
    <BarDivider $ml={22} />
    <ToolRun tools={TOOLS_STYLE} />
    <BarDivider $ml={21} />
    <ToolRun tools={TOOLS_AFTER} />
    <BarButton $ml={33} $w={111} $light>
      Crop
    </BarButton>
    <BarSpacer />
    <BarButton $ml={0} $w={131}>Revert</BarButton>
    <BarButton $ml={22} $w={114}>Done</BarButton>
    <BarButton $ml={22} $w={64}>
      <svg width="22" height="28" viewBox="0 0 22 28">
        <path d="M7 4V1H15V4M1 4H21M3 4V27H19V4M8 8V23M11 8V23M14 8V23" fill="none" stroke="#fff" strokeWidth="1.8" />
      </svg>
    </BarButton>
    <BarButton $ml={21} $w={65}>
      <svg width="22" height="32" viewBox="0 0 22 32">
        <path d="M6 11H1V31H21V11H16M11 21V2M5 8L11 2L17 8" fill="none" stroke="#fff" strokeWidth="1.8" />
      </svg>
    </BarButton>
  </MarkupBar>
)

const App = () => (
  <>
    <GlobalStyle />
    <Screen>
      <Desktop clock="15:27:36" />
      <MarkupWindow>
        <MarkupToolbar />
        <ShotFrame>
          <ShotScale>
            <Desktop clock="15:27:21" dim />
          </ShotScale>
          <CropRect>
            <CropCorner $v="top" $h="left" />
            <CropCorner $v="top" $h="right" />
            <CropCorner $v="bottom" $h="left" />
            <CropCorner $v="bottom" $h="right" />
          </CropRect>
        </ShotFrame>
        <WindowBase />
      </MarkupWindow>
    </Screen>
  </>
)

export default App
